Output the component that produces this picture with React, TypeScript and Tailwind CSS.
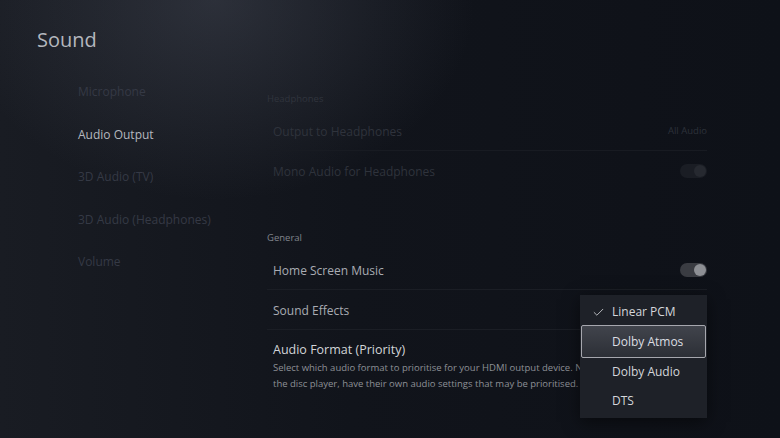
import { Check } from "lucide-react"

const navItems = [
  { label: "Microphone", active: false },
  { label: "Audio Output", active: true },
  { label: "3D Audio (TV)", active: false },
  { label: "3D Audio (Headphones)", active: false },
  { label: "Volume", active: false },
]

const formats = ["Linear PCM", "Dolby Atmos", "Dolby Audio", "DTS"]

function Toggle({ dim = false }: { dim?: boolean }) {
  return (
    <div
      className={
        "flex h-[14px] w-[27px] items-center justify-end rounded-full pr-[1px] " +
        (dim ? "bg-[#1a1d24]" : "bg-[#3a3c42]")
      }
    >
      <div className={"h-[12px] w-[12px] rounded-full " + (dim ? "bg-[#262930]" : "bg-[#8d8f94]")} />
    </div>
  )
}

function Row({
  label,
  dim = false,
  divider = true,
  right,
}: {
  label: string
  dim?: boolean
  divider?: boolean
  right?: React.ReactNode
}) {
  return (
    <div
      className={
        "flex h-[40px] items-center justify-between pl-[6px] " +
        (divider ? (dim ? "border-b border-[#181b22]" : "border-b border-[#1b1e25]") : "")
      }
    >
      <span className={"pt-[2px] text-[12px] " + (dim ? "text-[#2f333c]" : "text-[#a9acb3]")}>{label}</span>
      {right}
    </div>
  )
}

export default function App() {
  return (
    <div
      className="relative flex h-[438px] w-[780px] overflow-hidden bg-[radial-gradient(ellipse_260px_200px_at_215px_0px,rgba(95,100,115,0.32),transparent),linear-gradient(to_right,#191c23,#11141b_45%,#0e1118)] text-[#b8bbc2]"
      style={{ fontFamily: '"Open Sans", "Noto Sans", sans-serif' }}
    >
      {/* Left column */}
      <div className="w-[267px] shrink-0 pl-[37px] pt-[27px]">
        <h1 className="text-[20px] font-normal leading-[26px] text-[#b4b7be]">Sound</h1>
        <ul className="ml-[41px] mt-[18px]">
          {navItems.map((item) => (
            <li
              key={item.label}
              className={
                "flex h-[42.5px] items-center text-[12px] " +
                (item.active ? "text-[#b5b8bf]" : "text-[#353945]")
              }
            >
              {item.label}
            </li>
          ))}
        </ul>
      </div>

      {/* Right column */}
      <div className="w-[440px] shrink-0 pt-[89px]">
        <div className="flex h-[20px] items-center text-[9.5px] text-[#30343d]">Headphones</div>
        <div className="mt-[2px]">
          <Row
            label="Output to Headphones"
            dim
            right={<span className="pt-[2px] text-[9.5px] text-[#2d313a]">All Audio</span>}
          />
          <Row label="Mono Audio for Headphones" dim divider={false} right={<Toggle dim />} />
        </div>

        <div className="mt-[37px] flex h-[20px] items-center text-[9.5px] text-[#80848c]">General</div>
        <div className="mt-[2px]">
          <Row label="Home Screen Music" right={<Toggle />} />
          <Row label="Sound Effects" />
          <div className="px-[6px] pt-[10px]">
            <div className="text-[12.5px] leading-[20px] text-[#d2d4d8]">Audio Format (Priority)</div>
            <p className="whitespace-nowrap text-[9.5px] leading-[16px] text-[#8d9096]">
              Select which audio format to prioritise for your HDMI output device. Note that some apps, such as
              <br />
              the disc player, have their own audio settings that may be prioritised.
            </p>
          </div>
        </div>
      </div>

      {/* Dropdown menu */}
      <div className="absolute left-[580px] top-[295px] w-[127px] bg-[#1e2128] pb-[2px] shadow-[0_4px_16px_rgba(0,0,0,0.5)]">
        {formats.map((f, i) =>
          i === 1 ? (
            <div
              key={f}
              className="mx-[1px] flex h-[33px] items-center rounded-[2px] border border-[#a6a7ae] bg-[linear-gradient(to_bottom,#41444c,#2c2f36)] pl-[30px] text-[12px] text-[#dcdee2]"
            >
              {f}
            </div>
          ) : (
            <div
              key={f}
              className={
                "relative flex items-center pl-[32px] text-[12px] text-[#d4d6da] " +
                (i === 0 ? "h-[30px] pt-[4px]" : "h-[29px] pb-[1px]")
              }
            >
              {i === 0 && (
                <Check className="absolute left-[12px] h-[13px] w-[13px] text-[#d4d6da]" strokeWidth={1.5} />
              )}
              {f}
            </div>
          )
        )}
      </div>
    </div>
  )
}
